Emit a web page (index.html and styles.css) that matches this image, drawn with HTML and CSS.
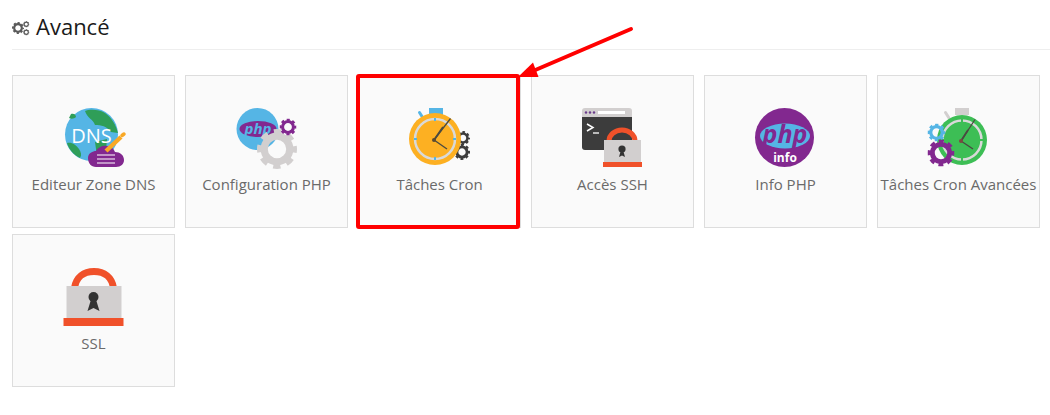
FILE: index.html
```html
<!DOCTYPE html>
<html lang="fr">
<head>
<meta charset="utf-8">
<title>Avancé</title>
<link rel="stylesheet" href="styles.css">
</head>
<body>
<svg class="defs" width="0" height="0" aria-hidden="true">
  <symbol id="gear" viewBox="-1 -1 2 2">
    <circle r="0.64" fill="none" stroke="currentColor" stroke-width="0.36"/>
    <circle r="0.86" fill="none" stroke="currentColor" stroke-width="0.28" stroke-dasharray="0.36 0.3154" stroke-dashoffset="0.18"/>
  </symbol>
</svg>
<main class="page">
  <h2 class="section-title">
    <svg class="title-icon" viewBox="0 0 18 16">
      <use href="#gear" x="0" y="2" width="12" height="12" class="c-titlegear"/>
      <use href="#gear" x="11" y="1" width="6.5" height="6.5" class="c-titlegear"/>
      <use href="#gear" x="11" y="9" width="6.5" height="6.5" class="c-titlegear"/>
    </svg>
    <span>Avancé</span>
  </h2>
  <div class="grid">
    <a class="card">
      <svg class="icon" viewBox="0 0 70 64">
        <circle cx="32.5" cy="28.5" r="26.5" fill="#55b5e5"/>
        <path d="M26 5 C30 3 40 3 46 7 C53 12 57 19 59 27 L52 26 C48 20 42 19 36 19 C34 13 28 12 26 5Z" fill="#2f9e58"/>
        <path d="M12 8 C14 7 17 8 17 11 C15 13 12 13 10 12Z" fill="#2f9e58"/>
        <path d="M8 37 C13 36 17 39 20 43 C22 46 23 49 21 52 C15 49 10 44 8 37Z" fill="#2f9e58"/>
        <path d="M36 36 L48 33 L47 44 L38 50 Z" fill="#2f9e58"/>
        <text x="32.5" y="37" class="dns-text">DNS</text>
        <path d="M29 52 C29 47 34 45 37 45 C39 41 44 39 48 40 C52 40 55 43 56 46 C61 46 65 49 65 54 C65 58 62 61 57 61 L37 61 C32 61 29 57 29 52Z" fill="#82288f"/>
        <path d="M38 49 H56 M38 53 H56 M38 57 H56" stroke="#fff" stroke-width="1.2"/>
        <path d="M47 45 L62 31" stroke="#f9a825" stroke-width="4.4"/>
        <path d="M63 29.5 L65 28" stroke="#f9a825" stroke-width="3.5" stroke-linecap="round"/>
      </svg>
      <span class="label">Editeur Zone DNS</span>
    </a>
    <a class="card">
      <svg class="icon" viewBox="0 0 70 64">
        <circle cx="25.5" cy="23" r="21" fill="#55b5e5"/>
        <ellipse cx="26" cy="23" rx="18.5" ry="8" fill="#82288f"/>
        <text x="26" y="28" class="php-small">php</text>
        <use href="#gear" x="25" y="23" width="40" height="40" class="c-grey"/>
        <use href="#gear" x="47.5" y="12.5" width="17" height="17" class="c-purple"/>
      </svg>
      <span class="label">Configuration PHP</span>
    </a>
    <a class="card">
      <svg class="icon" viewBox="0 0 70 64">
        <rect x="24" y="2" width="14" height="7" fill="#55b5e5"/>
        <path d="M14.500 6.500 L18 12" stroke="#55b5e5" stroke-width="3" stroke-linecap="round"/>
        <use href="#gear" x="51" y="25" width="14" height="14" class="c-dark"/>
        <use href="#gear" x="49" y="38" width="16" height="16" class="c-dark"/>
        <circle cx="30" cy="33" r="26" fill="#fdb022"/>
        <circle cx="30" cy="33" r="20" fill="none" stroke="#d9d9d9" stroke-width="2.500"/>
        <path d="M30 12 V15 M30 51 V54 M9 33 H12 M48 33 H51" stroke="#55b5e5" stroke-width="2"/>
        <path d="M29 34 L45.500 12.500" stroke="#4a4a40" stroke-width="1.300"/>
        <path d="M29 34 L42 43" stroke="#4a4a40" stroke-width="1.300"/>
        <path d="M29 34 L38 21" stroke="#4a4a40" stroke-width="1.800"/>
        <circle cx="29" cy="34" r="2" fill="#5a4a30"/>
      </svg>
      <span class="label">Tâches Cron</span>
    </a>
    <a class="card">
      <svg class="icon" viewBox="0 0 70 64">
        <path d="M4 11 V5 A3 3 0 0 1 7 2 H51 A3 3 0 0 1 54 5 V11 Z" fill="#d2cfcf"/>
        <path d="M4 11 H54 V44 H7 A3 3 0 0 1 4 41 Z" fill="#3c3c3c"/>
        <circle cx="8" cy="6.500" r="1.200" fill="#6b3d8c"/>
        <circle cx="12" cy="6.500" r="1.200" fill="#6b3d8c"/>
        <circle cx="16" cy="6.500" r="1.200" fill="#6b3d8c"/>
        <rect x="20" y="5" width="27" height="3" fill="#fff"/>
        <path d="M9 18 L15 21.500 L9 25" fill="none" stroke="#fff" stroke-width="1.500"/>
        <path d="M15 27 H21" stroke="#fff" stroke-width="1.300"/>
        <path d="M31 36 V35 A13 11 0 0 1 57 35 V36" fill="none" stroke="#f0512a" stroke-width="5"/>
        <rect x="26" y="34" width="37" height="22" fill="#d2cfcf"/>
        <rect x="25" y="56" width="39" height="5" fill="#f0512a"/>
        <circle cx="44" cy="43" r="3.600" fill="#333"/>
        <path d="M41 51 L43 44 H45 L47 51 L44 49.500 Z" fill="#333"/>
      </svg>
      <span class="label">Accès SSH</span>
    </a>
    <a class="card">
      <svg class="icon" viewBox="0 0 70 64">
        <circle cx="33.500" cy="31.500" r="29.500" fill="#82288f"/>
        <ellipse cx="34" cy="30" rx="25" ry="12.500" fill="#55b5e5"/>
        <text x="34" y="36.500" class="php-big">php</text>
        <text x="34" y="56" class="info-text">info</text>
      </svg>
      <span class="label">Info PHP</span>
    </a>
    <a class="card">
      <svg class="icon" viewBox="0 0 70 64">
        <rect x="31" y="2" width="14" height="7" fill="#d2cfcf"/>
        <path d="M21.500 6.500 L25 12" stroke="#d2cfcf" stroke-width="3" stroke-linecap="round"/>
        <circle cx="38" cy="34" r="25" fill="#3dbe55"/>
        <circle cx="38" cy="34" r="19.500" fill="none" stroke="#d9d9d9" stroke-width="2.500"/>
        <path d="M38 13 V16 M38 52 V55 M17 34 H20 M56 34 H59" stroke="#3dbe55" stroke-width="2"/>
        <path d="M37 35 L51 13.500" stroke="#4a4a40" stroke-width="1.300"/>
        <path d="M37 35 L49 43" stroke="#4a4a40" stroke-width="1.300"/>
        <path d="M37 35 L44 24" stroke="#4a4a40" stroke-width="1.800"/>
        <circle cx="37" cy="35" r="2" fill="#7a4a40"/>
        <use href="#gear" x="3.500" y="17.500" width="18" height="18" class="c-blue"/>
        <use href="#gear" x="3.500" y="33.500" width="27" height="27" class="c-purple"/>
      </svg>
      <span class="label">Tâches Cron Avancées</span>
    </a>
    <a class="card">
      <svg class="icon" viewBox="0 0 70 64">
        <path d="M15.500 23 C17 12 25 6.500 35 6.500 C45 6.500 53 12 54.500 23" fill="none" stroke="#f0512a" stroke-width="7"/>
        <rect x="7.500" y="21" width="55" height="32" fill="#d2cfcf"/>
        <rect x="4.500" y="53" width="60" height="8" fill="#f0512a"/>
        <circle cx="34.500" cy="32" r="5" fill="#333"/>
        <path d="M28.500 46 L32.500 33 H36.500 L40.500 46 L34.500 43 Z" fill="#333"/>
      </svg>
      <span class="label">SSL</span>
    </a>
  </div>
</main>
<svg class="annotation" viewBox="0 0 1050 415" aria-hidden="true">
  <rect x="358" y="76" width="160" height="151" rx="1" fill="none" stroke="#ff0000" stroke-width="4"/>
  <path d="M631 29 L533 71" stroke="#ff0000" stroke-width="4" stroke-linecap="round"/>
  <path d="M518 77 L533 62.500 L538.500 77 Z" fill="#ff0000"/>
</svg>
</body>
</html>
```
FILE: styles.css
```css
* { box-sizing: border-box; }
html, body { margin: 0; padding: 0; background: #fff; }
body {
  width: 1050px;
  height: 415px;
  overflow: hidden;
  position: relative;
  font-family: "Open Sans", sans-serif;
}
.defs { position: absolute; }
.page { padding: 13px 0 0 12px; }
.section-title {
  display: flex;
  align-items: center;
  gap: 6px;
  height: 37px;
  margin: 0 0 25px;
  padding-bottom: 10px;
  border-bottom: 1px solid #eee;
  font-size: 22px;
  font-weight: 400;
  line-height: 30px;
  color: #1a1a1a;
}
.title-icon { width: 18px; height: 16px; margin-top: 3px; }
.grid {
  display: grid;
  grid-template-columns: repeat(6, 163px);
  grid-auto-rows: 153px;
  column-gap: 10px;
  row-gap: 6px;
}
.card {
  display: flex;
  flex-direction: column;
  align-items: center;
  padding-top: 30px;
  background: #fafafa;
  border: 1px solid #ddd;
  color: #6a6a6a;
}
.icon { display: block; width: 70px; height: 64px; flex: none; }
.label {
  margin-top: 4px;
  font-size: 15px;
  line-height: 20px;
  white-space: nowrap;
}
.annotation {
  position: absolute;
  left: 0;
  top: 0;
  width: 1050px;
  height: 415px;
  pointer-events: none;
}
.c-grey { color: #d2cfcf; }
.c-purple { color: #82288f; }
.c-dark { color: #3c3c3c; }
.c-blue { color: #55b5e5; }
.c-titlegear { color: #5a5a5a; }
.dns-text {
  font-family: "Open Sans", sans-serif;
  font-size: 20px;
  fill: #fff;
  text-anchor: middle;
}
.php-small, .php-big {
  font-family: "Open Sans", sans-serif;
  font-style: italic;
  font-weight: 700;
  text-anchor: middle;
}
.php-small { font-size: 15px; fill: #55b5e5; }
.php-big { font-size: 25px; fill: #82288f; }
.info-text {
  font-family: "Open Sans", sans-serif;
  font-weight: 700;
  font-size: 12px;
  fill: #fff;
  text-anchor: middle;
}
```
